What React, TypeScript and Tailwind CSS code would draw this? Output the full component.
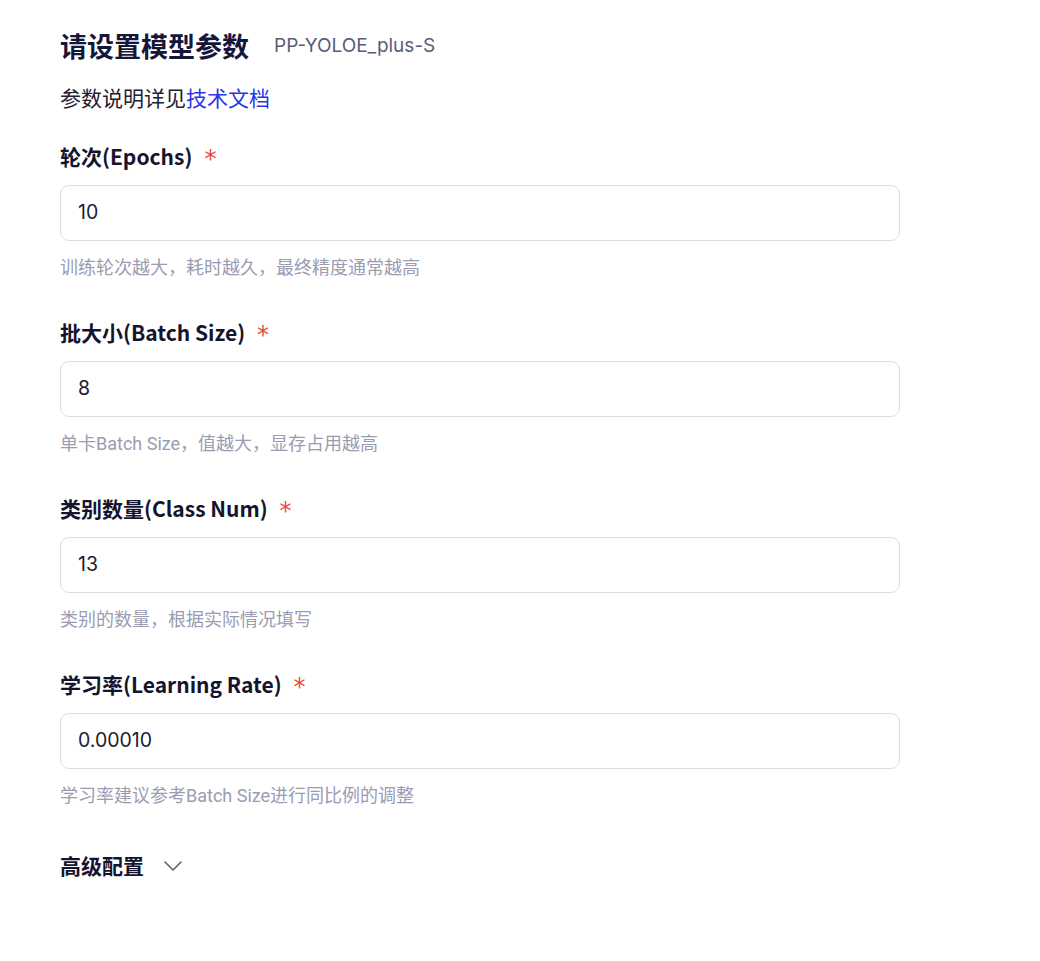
import React from "react";

const fields = [
  { label: "轮次(Epochs)", value: "10", help: "训练轮次越大，耗时越久，最终精度通常越高" },
  { label: "批大小(Batch Size)", value: "8", help: "单卡Batch Size，值越大，显存占用越高" },
  { label: "类别数量(Class Num)", value: "13", help: "类别的数量，根据实际情况填写" },
  { label: "学习率(Learning Rate)", value: "0.00010", help: "学习率建议参考Batch Size进行同比例的调整" },
];

const cjk = "font-['Noto_Sans_CJK_SC',sans-serif]";

const App: React.FC<{}> = () => {
  return (
    <div className="min-h-[961px] w-[1040px] bg-white px-[60px] pt-[28px]">
      <div className="flex h-9 items-center gap-[25px]">
        <h1 className={`${cjk} text-[27px] font-bold text-[#16163a]`}>请设置模型参数</h1>
        <span className="font-['Inter',sans-serif] text-[19px] text-[#5a5c76]">PP-YOLOE_plus-S</span>
      </div>
      <p className={`${cjk} mt-[19px] h-7 text-[21px] leading-7 text-[#1f2030]`}>
        参数说明详见<a className="text-[#2b35e6]">技术文档</a>
      </p>
      <div className="mt-[32px] flex w-[840px] flex-col gap-[39px]">
        {fields.map((f) => (
          <div key={f.label} className="flex flex-col">
            <div className="flex h-7 items-center gap-[12px]">
              <span className={`${cjk} text-[21px] font-bold text-[#14142e]`}>{f.label}</span>
              <span className="mt-[4px] font-['DejaVu_Sans',sans-serif] text-[24px] leading-none text-[#f0453c]">*</span>
            </div>
            <div className="mt-[14px] flex h-14 items-center rounded-[9px] border border-[#dcdde9] px-[17px]">
              <span className="font-['Inter',sans-serif] text-[19.5px] text-[#1b1c30]">{f.value}</span>
            </div>
            <p className="mt-[15px] h-6 font-['Roboto','Noto_Sans_CJK_SC',sans-serif] text-[18px] leading-6 text-[#9a9cb2]">
              {f.help}
            </p>
          </div>
        ))}
      </div>
      <div className="mt-[44px] flex h-7 items-center gap-[19px]">
        <span className={`${cjk} text-[21px] font-bold text-[#14142e]`}>高级配置</span>
        <svg width="20" height="12" viewBox="0 0 20 12" fill="none">
          <path d="M2 2l8 8 8-8" stroke="#5c5e76" strokeWidth="1.6" strokeLinecap="round" strokeLinejoin="round" />
        </svg>
      </div>
    </div>
  );
};

export default App;
